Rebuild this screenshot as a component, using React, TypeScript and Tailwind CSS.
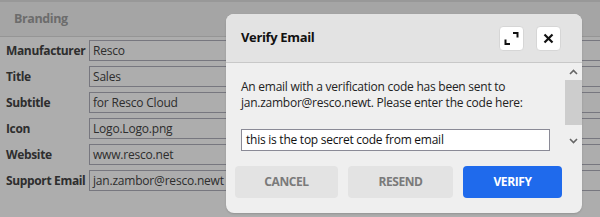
import React from 'react';

const fields: { label: string; value: string }[] = [
  { label: 'Manufacturer', value: 'Resco' },
  { label: 'Title', value: 'Sales' },
  { label: 'Subtitle', value: 'for Resco Cloud' },
  { label: 'Icon', value: 'Logo.Logo.png' },
  { label: 'Website', value: 'www.resco.net' },
  { label: 'Support Email', value: 'jan.zambor@resco.newt' },
];

const font = { fontFamily: '"Open Sans", "Noto Sans", sans-serif' };

const ExpandIcon = () => (
  <svg width="15" height="15" viewBox="0 0 15 15" fill="none" stroke="#111" strokeWidth="2" strokeLinecap="square">
    <path d="M10 2h3.5v3.5" />
    <path d="M1.5 9.5v3.5H5" />
  </svg>
);

const CloseIcon = () => (
  <svg width="11" height="11" viewBox="0 0 11 11" fill="none" stroke="#111" strokeWidth="2.2">
    <path d="M1.5 1.5l8 8M9.5 1.5l-8 8" />
  </svg>
);

const Chevron = ({ up }: { up?: boolean }) => (
  <svg width="9" height="6" viewBox="0 0 9 6" fill="none" stroke="#666" strokeWidth="1.6">
    <path d={up ? 'M1 5l3.5-3.5L8 5' : 'M1 1l3.5 3.5L8 1'} />
  </svg>
);

const BrandingForm = () => (
  <div className="h-[217px] w-[600px] bg-white border-t-2 border-[#e0e0e0]">
    <div className="h-[35px] bg-[#f4f4f4] border-b border-[#dcdcdc] flex items-center pl-[14px]">
      <span className="text-[12.5px] font-bold tracking-[-0.4px] text-[#a0a0a0]">Branding</span>
    </div>
    <div className="mt-[3px] flex flex-col gap-[5px]">
      {fields.map((f) => (
        <div key={f.label} className="grid grid-cols-[89px_1fr] items-center h-[21px]">
          <span className="pl-[6px] text-[12px] font-bold tracking-[-0.35px] text-[#444] whitespace-nowrap">{f.label}</span>
          <div className="h-[21px] border border-r-0 border-[#b0b0bc] bg-white flex items-center pl-[3px] text-[12px] tracking-[-0.2px] text-[#444]">
            {f.value}
          </div>
        </div>
      ))}
    </div>
  </div>
);

const VerifyDialog = () => (
  <div className="w-[356px] h-[199px] rounded-[8px] bg-[#efefef] overflow-hidden flex flex-col shadow-[0_1px_2px_rgba(0,0,0,0.15)]">
    <div className="h-[49px] shrink-0 bg-[#e3e3e3] border-b border-[#c8c8c8] flex items-center pl-[15px] pr-[21px]">
      <span className="flex-1 text-[13px] font-bold tracking-[-0.35px] text-[#111]">Verify Email</span>
      <div className="flex gap-[12px]">
        <button className="w-[25px] h-[25px] rounded-[4px] bg-white border border-[#d6d6d6] flex items-center justify-center">
          <ExpandIcon />
        </button>
        <button className="w-[25px] h-[25px] rounded-[4px] bg-white border border-[#d6d6d6] flex items-center justify-center">
          <CloseIcon />
        </button>
      </div>
    </div>
    <div className="flex flex-1">
      <div className="flex-1 flex flex-col">
        <div className="pl-[15px] pr-[14px] pt-[16px]">
          <p className="text-[12px] leading-[16px] tracking-[-0.25px] text-[#222]">
            An email with a verification code has been sent to jan.zambor@resco.newt. Please enter the code here:
          </p>
          <div className="mt-[18px] w-[309px] h-[22px] border border-[#8a8a96] bg-white flex items-center pl-[4px] text-[12px] tracking-[-0.25px] text-[#111]">
            this is the top secret code from email
          </div>
        </div>
        <div className="mt-[15px] pl-[9px] flex gap-[10px]">
          <button className="w-[103px] h-[32px] rounded-[4px] bg-[#e3e3e3] text-[12px] font-bold tracking-[-0.4px] text-[#7a7a7a]">CANCEL</button>
          <button className="w-[105px] h-[32px] rounded-[4px] bg-[#e3e3e3] text-[12px] font-bold tracking-[-0.4px] text-[#7a7a7a]">RESEND</button>
          <button className="w-[99px] h-[32px] rounded-[4px] bg-[#1f6aec] text-[12px] font-bold tracking-[-0.4px] text-white">VERIFY</button>
        </div>
      </div>
      <div className="w-[17px] flex flex-col items-center pt-[6px]">
        <Chevron up />
        <div className="mt-[5px] w-[17px] h-[45px] bg-[#cdcdcd]" />
        <div className="mt-[13px]"><Chevron /></div>
      </div>
    </div>
  </div>
);

export default function App() {
  return (
    <div className="relative w-[600px] h-[217px] overflow-hidden" style={font}>
      <BrandingForm />
      <div className="absolute inset-0 bg-black/[0.32]" />
      <div className="absolute left-[226px] top-[14px]">
        <VerifyDialog />
      </div>
    </div>
  );
}
